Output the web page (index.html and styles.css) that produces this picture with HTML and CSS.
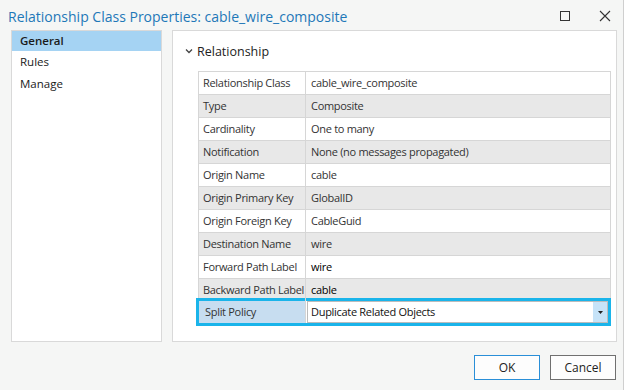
FILE: index.html
```html
<!DOCTYPE html>
<html lang="en">
<head>
    <meta charset="UTF-8">
    <title>Relationship Class Properties</title>
    <link rel="stylesheet" href="styles.css">
</head>
<body>
    <div class="window">
        <div class="titlebar">
            <span class="title">Relationship Class Properties: cable_wire_composite</span>
            <div class="title-buttons">
                <svg class="tb-icon" width="12" height="12" viewBox="0 0 12 12"><rect x="1.5" y="1.5" width="9" height="9" fill="none" stroke="#333" stroke-width="1"/></svg>
                <svg class="tb-icon" width="12" height="12" viewBox="0 0 12 12"><path d="M1 1 L11 11 M11 1 L1 11" stroke="#333" stroke-width="1.1" fill="none"/></svg>
            </div>
        </div>

        <div class="main">
            <ul class="nav">
                <li class="nav-item active">General</li>
                <li class="nav-item">Rules</li>
                <li class="nav-item">Manage</li>
            </ul>

            <div class="content">
                <div class="section-head">
                    <svg width="8" height="6" viewBox="0 0 8 6"><path d="M1 1.5 L4 4.5 L7 1.5" stroke="#444" stroke-width="1.3" fill="none"/></svg>
                    <span>Relationship</span>
                </div>

                <div class="props">
                    <div class="prop-row"><div class="prop-label">Relationship Class</div><div class="prop-value">cable_wire_composite</div></div>
                    <div class="prop-row alt"><div class="prop-label">Type</div><div class="prop-value">Composite</div></div>
                    <div class="prop-row"><div class="prop-label">Cardinality</div><div class="prop-value">One to many</div></div>
                    <div class="prop-row alt"><div class="prop-label">Notification</div><div class="prop-value">None (no messages propagated)</div></div>
                    <div class="prop-row"><div class="prop-label">Origin Name</div><div class="prop-value">cable</div></div>
                    <div class="prop-row alt"><div class="prop-label">Origin Primary Key</div><div class="prop-value">GlobalID</div></div>
                    <div class="prop-row"><div class="prop-label">Origin Foreign Key</div><div class="prop-value">CableGuid</div></div>
                    <div class="prop-row alt"><div class="prop-label">Destination Name</div><div class="prop-value">wire</div></div>
                    <div class="prop-row"><div class="prop-label">Forward Path Label</div><div class="prop-value strong">wire</div></div>
                    <div class="prop-row alt"><div class="prop-label">Backward Path Label</div><div class="prop-value strong">cable</div></div>
                    <div class="prop-row selected">
                        <div class="prop-label">Split Policy</div>
                        <div class="prop-value">
                            <div class="combo">
                                <span class="combo-text">Duplicate Related Objects</span>
                                <span class="combo-btn"><svg width="5" height="3" viewBox="0 0 5 3"><path d="M0 0 H5 L2.5 3 Z" fill="#222"/></svg></span>
                            </div>
                        </div>
                    </div>
                </div>
            </div>
        </div>

        <div class="footer">
            <button class="btn default">OK</button>
            <button class="btn">Cancel</button>
        </div>
    </div>
</body>
</html>
```

FILE: styles.css
```css
:root {
    --title-color: #1e78b8;
    --panel-border: #d9d9d9;
    --row-alt: #e8e8e8;
    --row-line: #d6d6d6;
    --focus: #1ab4ea;
}

* {
    box-sizing: border-box;
}

body {
    margin: 0;
    background-color: #ffffff;
    font-family: 'Segoe UI', 'Open Sans', sans-serif;
    font-size: 11px;
    color: #2b2b2b;
}

.window {
    width: 624px;
    height: 390px;
    background-color: #f5f6f5;
    border-right: 1px solid #cfcfcf;
    display: flex;
    flex-direction: column;
}

.titlebar {
    height: 30px;
    display: flex;
    align-items: center;
    justify-content: space-between;
    padding: 0 12px 0 8px;
}

.title {
    color: var(--title-color);
    font-size: 14px;
    margin-top: 2px;
}

.title-buttons {
    display: flex;
    gap: 28px;
    margin-top: 2px;
}

.main {
    display: flex;
    gap: 10px;
    padding: 0 6px 0 11px;
    height: 312px;
}

.nav {
    list-style: none;
    margin: 0;
    padding: 0;
    width: 151px;
    background-color: white;
    border: 1px solid var(--panel-border);
}

.nav-item {
    height: 22px;
    line-height: 22px;
    padding-left: 8px;
    font-size: 11.5px;
    color: #1a1a1a;
}

.nav-item.active {
    background-color: #a5d3f3;
    font-weight: 600;
    height: 20px;
    line-height: 20px;
}

.content {
    flex: 1;
    background-color: white;
    border: 1px solid var(--panel-border);
    padding: 9px 5px 0 25px;
}

.section-head {
    display: flex;
    align-items: center;
    gap: 4px;
    margin-left: -13px;
    height: 22px;
    font-size: 12.5px;
    color: #222;
}

.props {
    margin-top: 9px;
    border-top: 1px solid var(--row-line);
    border-left: 1px solid var(--row-line);
    border-right: 1px solid var(--row-line);
    letter-spacing: -0.3px;
    white-space: nowrap;
}

.prop-row {
    display: grid;
    grid-template-columns: 107px 1fr;
    height: 23px;
    border-bottom: 1px solid var(--row-line);
    background-color: white;
}

.prop-row.alt {
    background-color: var(--row-alt);
}

.prop-label {
    padding-left: 4px;
    line-height: 22px;
    border-right: 1px solid var(--row-line);
    color: #333;
    overflow: hidden;
}

.prop-value {
    padding-left: 5px;
    line-height: 22px;
    color: #333;
}

.prop-value.strong {
    color: #000;
    font-weight: 500;
}

.prop-row.selected {
    height: 28px;
    margin: -4px -1px 0 -3px;
    border: 3px solid var(--focus);
    background-color: white;
}

.prop-row.selected .prop-label {
    background-color: #c7ddf0;
    line-height: 22px;
    padding-left: 6px;
}

.prop-row.selected .prop-value {
    padding: 0 0 0 1px;
}

.combo {
    display: flex;
    height: 22px;
    border: 1px solid #bcbcbc;
    background-color: white;
}

.combo-text {
    flex: 1;
    padding-left: 3px;
    line-height: 20px;
    color: #111;
}

.combo-btn {
    width: 14px;
    background-color: #c6e3f8;
    display: flex;
    align-items: center;
    justify-content: center;
}

.footer {
    flex: 1;
    display: flex;
    justify-content: flex-end;
    align-items: flex-start;
    gap: 10px;
    padding: 13px 7px 0 0;
}

.btn {
    width: 66px;
    height: 25px;
    font-family: inherit;
    font-size: 12px;
    color: #222;
    background-color: #fdfdfd;
    border: 1px solid #707070;
}

.btn.default {
    border-color: #2a8fd8;
}
```
